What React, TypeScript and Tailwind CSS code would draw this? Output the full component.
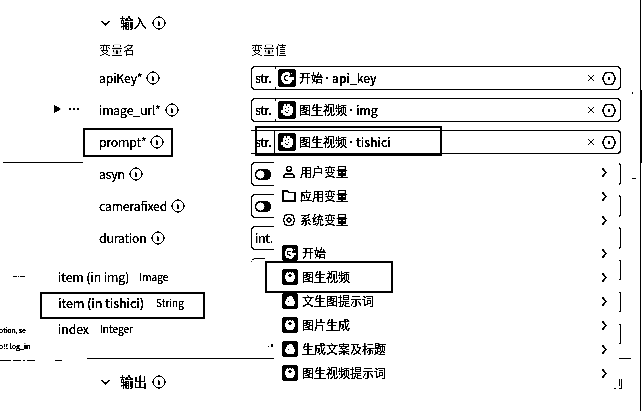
import React from "react";

const Info = () => (
  <svg className="size-[14px] shrink-0" viewBox="0 0 14 14" fill="none" stroke="black">
    <circle cx="7" cy="7" r="6" strokeWidth="1" />
    <path d="M6 5h1v1h1v4H6z" fill="black" stroke="none" />
  </svg>
);

const ChevronDown = () => (
  <svg className="h-[6px] w-[9px] shrink-0" viewBox="0 0 9 6" fill="none" stroke="black" strokeWidth="1.5">
    <path d="M.7 1 4.5 4.7 8.3 1" />
  </svg>
);

const ChevronRight = () => (
  <svg className="h-[9px] w-[5px] shrink-0" viewBox="0 0 5 9" fill="none" stroke="black" strokeWidth="1.3">
    <path d="M.5 .5 4.2 4.5 .5 8.5" />
  </svg>
);

const Hexagon = () => (
  <svg className="h-[13px] w-[14px] shrink-0" viewBox="0 0 14 13" fill="none" stroke="black" strokeWidth="1.1">
    <path d="M4 .8h6L11.7 2.5 13.2 6.5 11.7 10.5 10 12.2H4L2.3 10.5.8 6.5 2.3 2.5Z" />
    <path d="M6 5.5h2v2H6z" fill="black" stroke="none" />
  </svg>
);

const Cross = () => (
  <svg className="size-[6px] shrink-0" viewBox="0 0 6 6" stroke="black" strokeWidth=".7">
    <path d="M.5 .5 5.5 5.5M5.5 .5.5 5.5" />
  </svg>
);

type Kind = "start" | "bot" | "egg" | "face";

const NodeIcon = ({ kind, className }: { kind: Kind; className: string }) => (
  <svg className={className} viewBox="0 0 16 16" shapeRendering="crispEdges">
    <rect width="16" height="16" rx="3" fill="black" />
    {kind === "start" && (
      <>
        <path d="M9.500 3H6L4 4.500 3 6.500V10L4.500 12.500 7 13.500H10L12 12 12.500 9.500H14V7.500H10V6L11 5Z" fill="white" />
        <path d="M9 6H7.500a1.800 1.800 0 0 0 0 4H9" fill="none" stroke="black" />
        <path d="M11.500 3.500h1.200v1.200h-1.200z" fill="white" />
      </>
    )}
    {kind === "bot" && (
      <>
        <path d="M5 3h1v1h1V3h2v1h1V3h1v1h1v2h1v4h-1v2h-1v1H5v-1H4v-2H3V6h1V4h1Z" fill="white" />
        <path d="M7 5h2v1h1v1H9v1H7V7H6V6h1z" fill="black" />
      </>
    )}
    {kind === "egg" && (
      <>
        <path d="M7 3h3v1h1v2h1v2h1v3h-1v2H5v-1H4v-1H3V8h1V6h1V4h2Z" fill="white" />
        <path d="M6 8h1v1H6z" fill="black" />
      </>
    )}
    {kind === "face" && (
      <>
        <path d="M5 3h2v1h1V3h3v1h1v1h1v6h-1v1h-1v1H6v-1H4v-1H3V8h1V4h1Z" fill="white" />
        <path d="M6 6h1v1H6zM8.500 5H10v1.500H8.500zM6 9h1v1H6zM9 8h1v1H9zM7.500 10H9v1H7.500z" fill="black" />
      </>
    )}
  </svg>
);

const Toggle = () => (
  <svg className="h-[11px] w-[16px]" viewBox="0 0 16 11">
    <rect x="0" y="0" width="16" height="11" rx="5.5" fill="black" />
    <circle cx="5.4" cy="5.5" r="4.3" fill="white" />
  </svg>
);

type Row = { name?: string; type?: string; source?: string; value?: string; kind?: Kind };

const rows: Row[] = [
  { name: "apiKey*", type: "str.", source: "开始", value: "api_key", kind: "start" },
  { name: "image_url*", type: "str.", source: "图生视频", value: "img", kind: "face" },
  { name: "prompt*", type: "str.", source: "图生视频", value: "tishici", kind: "face" },
  { name: "asyn", type: "toggle" },
  { name: "camerafixed", type: "toggle" },
  { name: "duration", type: "int." },
  {},
  {},
  {},
];

const Field = ({ row, index }: { row: Row; index: number }) => {
  if (!row.name)
    return (
      <div className="flex h-6 w-[370px] justify-between">
        <div className={index === 6 ? "h-3 w-[14px] rounded-tl-[5px] border-t border-black" : "w-[14px]"} />
        <div className="my-[2px] w-[2px] rounded-r-[2px] border-r border-black" />
      </div>
    );
  const edge =
    index === 2
      ? "flex h-6 w-[370px] items-center rounded-r-[4px] border-y border-r border-black"
      : "flex h-6 w-[370px] items-center rounded-[4px] border border-black";
  return (
    <div className={edge}>
      <div
        className={
          index === 2
            ? "flex h-full w-[24px] items-center border-r border-black pl-[4px] text-[12.5px]"
            : "flex h-full w-[23px] items-center pl-[3px] text-[12.5px]"
        }
      >
        {row.type === "toggle" ? <Toggle /> : <span className="tracking-[-0.4px]">{row.type}</span>}
      </div>
      {row.value && (
        <>
          {index !== 2 && (
            <div className="-mr-px flex h-full w-px flex-col justify-between">
              <i className="h-[2px] bg-black" />
              <i className="h-[2px] bg-black" />
            </div>
          )}
          <NodeIcon kind={row.kind!} className="ml-[3px] size-[18px]" />
          <div className="ml-[3px] flex flex-1 items-center text-[12px]">
            <span className="w-max">{row.source}</span>
            <span className="w-[9px] text-center font-['Liberation_Sans',sans-serif] font-bold">·</span>
            <span className="text-[12px] font-medium">{row.value}</span>
          </div>
          <Cross />
          <div className="ml-2 mr-1">
            <Hexagon />
          </div>
        </>
      )}
    </div>
  );
};

const SectionTitle = ({ children }: { children: React.ReactNode }) => (
  <div className="flex h-[22px] items-center pl-[101px]">
    <ChevronDown />
    <span className="ml-[10px] mr-[5px] text-[13.5px]">{children}</span>
    <Info />
  </div>
);

const groups = ["用户变量", "应用变量", "系统变量"];
const nodes: { label: string; kind: Kind }[] = [
  { label: "开始", kind: "start" },
  { label: "图生视频", kind: "bot" },
  { label: "文生图提示词", kind: "egg" },
  { label: "图片生成", kind: "bot" },
  { label: "生成文案及标题", kind: "egg" },
  { label: "图生视频提示词", kind: "bot" },
];

const GroupIcon = ({ index }: { index: number }) => (
  <svg className="h-[14px] w-[14px]" viewBox="0 0 14 14" fill="none" stroke="black" strokeWidth="1.3">
    {index === 0 && (
      <>
        <circle cx="7" cy="3.800" r="2.500" />
        <path d="M2.200 12.300v-1.500Q2.500 8.800 5 8.800h4q2.500 0 2.800 2v1.500Z" />
      </>
    )}
    {index === 1 && <path d="M.8 2h4.500l1.400 1.500h6.500v8.700H.8Z" />}
    {index === 2 && (
      <g strokeWidth="1">
        <path d="M5 2 7 1 9 2l2.300.3.500 2.400L12.800 7l-1 2.300-.5 2.400L9 12l-2 1L5 12l-2.300-.3-.5-2.400L1.200 7l1-2.300.5-2.400Z" />
        <circle cx="7" cy="7" r="2" />
      </g>
    )}
  </svg>
);

export default function App() {
  return (
    <div className="relative h-[411px] w-[642px] overflow-hidden bg-white font-['Noto_Sans_CJK_SC','Noto_Sans',sans-serif] leading-none text-black brightness-[.72] contrast-[20] grayscale">
      <main className="flex flex-col pt-3">
        <SectionTitle>输入</SectionTitle>
        <div className="mt-2 flex h-4 items-center pl-[99px] text-[12px] text-[#777]">
          <span className="w-[152px]">变量名</span>
          <span>变量值</span>
        </div>
        <div className="mt-1 flex flex-col">
          {rows.map((row, i) => (
            <div key={i} className="flex h-8 items-center pl-[99px]">
              <div className="flex w-[152px] shrink-0 items-center gap-1 text-[12.3px] tracking-[-0.2px]">
                {row.name && (
                  <>
                    <span>{row.name}</span>
                    <Info />
                  </>
                )}
              </div>
              <Field row={row} index={i} />
            </div>
          ))}
        </div>
        <div className="ml-[87px] mr-[11px] mt-2 h-px bg-black" />
        <div className="mt-3">
          <SectionTitle>输出</SectionTitle>
        </div>
      </main>

      {/* Variable picker */}
      <div className="absolute left-[274px] top-[156px] flex h-[234px] w-[345px] flex-col bg-white pt-1 text-[12px]">
        {groups.map((g, i) => (
          <div key={g} className="flex h-6 items-center pl-2 pr-[12px]">
            <GroupIcon index={i} />
            <span className="ml-1 flex-1">{g}</span>
            <ChevronRight />
          </div>
        ))}
        <div className="h-[9px]" />
        {nodes.map((n) => (
          <div key={n.label} className="flex h-6 items-center pl-2 pr-[12px]">
            <NodeIcon kind={n.kind} className="size-4" />
            <span className="ml-1 flex-1">{n.label}</span>
            <ChevronRight />
          </div>
        ))}
      </div>

      {/* Canvas behind the panel */}
      <div className="absolute left-[3px] top-[162px] h-px w-20 bg-black" />
      <div className="absolute left-[54px] top-[105px] h-[8px] w-[7px] bg-black [clip-path:polygon(0_0,100%_50%,0_100%)]" />
      <div className="absolute left-[69px] top-[108px] flex gap-[2px]">
        <i className="h-[2px] w-[2px] bg-black" />
        <i className="h-[2px] w-[2px] bg-black" />
        <i className="h-[2px] w-[2px] bg-black" />
      </div>
      <div className="absolute left-[58px] top-[264px] flex flex-col text-[12.3px]">
        <div className="flex h-[26px] items-center gap-[10px]">
          <span className="tracking-[-0.1px]">item (in img)</span>
          <span className="text-[10px]">Image</span>
        </div>
        <div className="flex h-[26px] items-center gap-3">
          <span className="font-medium tracking-[-0.1px]">item (in tishici)</span>
          <span className="text-[10px]">String</span>
        </div>
        <div className="flex h-[26px] items-center gap-[11px]">
          <span className="tracking-[-0.1px]">index</span>
          <span className="text-[10px]">Integer</span>
        </div>
      </div>
      <div className="absolute left-[-1px] top-[322px] flex flex-col text-[7px] font-medium">
        <span className="flex h-4 items-center tracking-[-0.2px]">otion, se</span>
        <span className="flex h-4 items-center">o!! log_in</span>
      </div>
      <div className="absolute left-[13px] top-[276px] flex gap-px">
        <i className="h-px w-[4px] bg-black" />
        <i className="h-px w-px bg-black" />
        <i className="h-px w-[5px] bg-black" />
      </div>
      <div className="absolute left-0 top-[360px] flex gap-[2px]">
        <i className="h-px w-[11px] bg-black" />
        <i className="h-px w-[8px] bg-black" />
        <i className="h-px w-[2px] bg-black" />
        <i className="h-px w-[8px] bg-black" />
        <i className="ml-[18px] h-px w-[7px] bg-black" />
      </div>
      <div className="absolute left-[268px] top-[344px] flex items-end gap-[2px]">
        <i className="h-px w-px bg-black" />
        <i className="h-[3px] w-[2px] bg-black" />
      </div>
      <div className="absolute left-[619px] top-[379px] h-[10px] w-[3px] border-b border-r border-black pb-[2px]">
        <i className="block h-full w-px bg-black" />
      </div>
      <div className="absolute left-[614px] top-[388px] h-px w-[2px] bg-black" />
      <div className="absolute left-[640px] top-0 h-full w-px bg-black" />
      <div className="absolute left-[640px] top-[90px] h-[73px] w-[2px] bg-black" />
      <div className="absolute left-[632px] top-[92px] h-[2px] w-px bg-black" />
      <div className="absolute left-[632px] top-[178px] h-px w-1 bg-black" />

      {/* Highlight frames */}
      <div className="absolute left-[83px] top-[128px] h-[29px] w-[90px] border-2 border-black" />
      <div className="absolute left-[255px] top-[126px] h-[30px] w-[187px] border-2 border-black" />
      <div className="absolute left-[265px] top-[261px] h-[32px] w-[128px] border-2 border-black" />
      <div className="absolute left-[40px] top-[292px] h-[27px] w-[165px] border-2 border-black" />
    </div>
  );
}
